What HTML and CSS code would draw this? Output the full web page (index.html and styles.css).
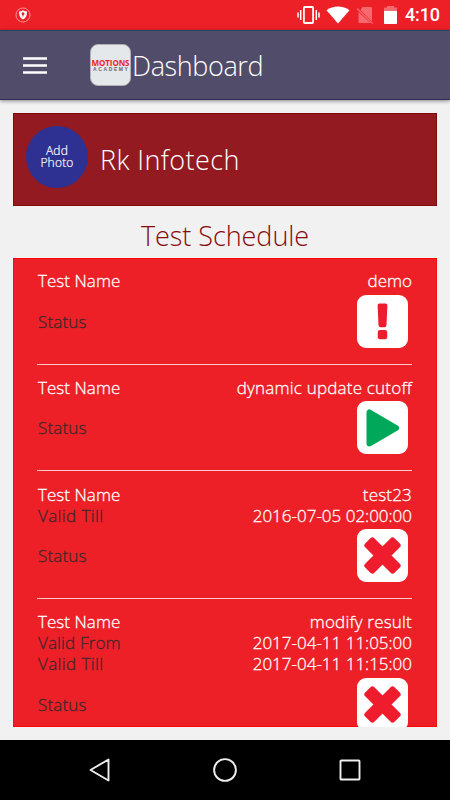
FILE: index.html
```html
<!DOCTYPE html>
<html lang="en">
<head>
<meta charset="utf-8">
<title>Dashboard</title>
<link rel="stylesheet" href="styles.css">
</head>
<body>
<div class="statusbar">
  <svg class="shield" width="16" height="16" viewBox="0 0 16 16"><circle cx="8" cy="8" r="7" fill="none" stroke="#f8a0a3" stroke-width=".9"/><path d="M8 3.300c1.400.9 2.800 1.100 4 1.100 0 4-.9 6.500-4 8.200-3.100-1.700-4-4.200-4-8.200 1.200 0 2.600-.2 4-1.100z" fill="#fff"/><path d="M8 5.200a1.500 1.500 0 0 1 .7 2.800L8 10.500 7.300 8A1.500 1.500 0 0 1 8 5.200z" fill="#ed2027"/></svg>
  <svg class="sysicons" width="106" height="20" viewBox="0 0 106 20">
    <g fill="none" stroke="#fff" stroke-width="1.800"><rect x="6.900" y="2" width="9.200" height="16" rx="1"/><path d="M3.700 5v10M1 7.500v5M19.300 5v10M22 7.500v5" stroke-width="1.500"/></g>
    <path d="M29.500 5.300C36 .3 46 .3 52.500 5.300L41 18.500z" fill="#fff"/>
    <path d="M65.500 2H74q1 0 1 1v13.400L63.500 5zM61.500 7v10q0 1 1 1h11z" fill="#f46a6e"/><path d="M60 3.500l15.500 15" stroke="#f46a6e" stroke-width="1.300"/>
    <path d="M87 6V3.500q0-1 1-1h2V1h7v1.500h2q1 0 1 1V6z" fill="#f46a6e"/><path d="M87 6h13v12q0 1-1 1H88q-1 0-1-1z" fill="#fff"/>
  </svg>
  <span class="clock">4:10</span>
</div>
<header class="appbar">
  <svg class="menu" width="24" height="17" viewBox="0 0 24 17"><path d="M0 1.500h24M0 8.500h24M0 15.500h24" stroke="#fff" stroke-width="2.400"/></svg>
  <div class="logo"><span class="logo-top">MOTIONS</span><span class="logo-sub">ACADEMY</span></div>
  <h1 class="title">Dashboard</h1>
</header>
<main class="content">
  <section class="profile">
    <div class="avatar"><span>Add</span><span>Photo</span></div>
    <span class="username">Rk Infotech</span>
  </section>
  <h2 class="heading">Test Schedule</h2>
  <section class="schedule">
    <article class="test">
      <div class="row name"><span class="label">Test Name</span><span class="demo">demo</span></div>
      <div class="row state"><span class="status">Status</span>
        <svg class="badge" viewBox="0 0 51 53"><rect width="51" height="53" rx="9" fill="#fff"/><path d="M22.500 8.500h6q2 0 1.900 2l-.9 19.500q-.2 2.200-2 2.200h-4q-1.800 0-2-2.200L20.600 10.500q-.1-2 1.900-2z" fill="#ef1c2e"/><rect x="20.800" y="35" width="9.400" height="9.300" rx="2" fill="#ef1c2e"/></svg>
      </div>
    </article>
    <article class="test">
      <div class="row name"><span class="label">Test Name</span><span class="dynamic">dynamic update cutoff</span></div>
      <div class="row state"><span class="status">Status</span>
        <svg class="badge" viewBox="0 0 51 53"><rect width="51" height="53" rx="9" fill="#fff"/><path d="M12.500 11.500v31l26.500-15.500z" fill="#00a859" stroke="#00a859" stroke-width="6" stroke-linejoin="round"/></svg>
      </div>
    </article>
    <article class="test">
      <div class="row name"><span class="label">Test Name</span><span class="test23">test23</span></div>
      <div class="row"><span class="till">Valid Till</span><span class="date">2016-07-05 02:00:00</span></div>
      <div class="row state"><span class="status">Status</span>
        <svg class="badge" viewBox="0 0 51 53"><rect width="51" height="53" rx="9" fill="#fff"/><g transform="rotate(45 25.500 26.500)" fill="#ef1c2e"><rect x="4.700" y="20" width="41.600" height="13" rx="2.800"/><rect x="19" y="5.700" width="13" height="41.600" rx="2.800"/></g></svg>
      </div>
    </article>
    <article class="test">
      <div class="row name"><span class="label">Test Name</span><span class="modify">modify result</span></div>
      <div class="row"><span class="from">Valid From</span><span class="date">2017-04-11 11:05:00</span></div>
      <div class="row"><span class="till">Valid Till</span><span class="date">2017-04-11 11:15:00</span></div>
      <div class="row state"><span class="status">Status</span>
        <svg class="badge" viewBox="0 0 51 53"><rect width="51" height="53" rx="9" fill="#fff"/><g transform="rotate(45 25.500 26.500)" fill="#ef1c2e"><rect x="4.700" y="20" width="41.600" height="13" rx="2.800"/><rect x="19" y="5.700" width="13" height="41.600" rx="2.800"/></g></svg>
      </div>
    </article>
  </section>
</main>
<nav class="navbar">
  <svg width="24" height="26" viewBox="0 0 24 26"><path d="M20.500 2.500v21L2.500 13z" fill="none" stroke="#eee" stroke-width="1.900" stroke-linejoin="round"/></svg>
  <svg width="24" height="26" viewBox="0 0 24 26"><circle cx="12" cy="13" r="10.900" fill="none" stroke="#eee" stroke-width="1.900"/></svg>
  <svg width="24" height="26" viewBox="0 0 24 26"><rect x="2.500" y="3.500" width="19" height="19" rx=".8" fill="none" stroke="#eee" stroke-width="1.900"/></svg>
</nav>
</body>
</html>
```

FILE: styles.css
```css
* { box-sizing: border-box; }
body {
  margin: 0;
  width: 450px;
  height: 800px;
  display: flex;
  flex-direction: column;
  overflow: hidden;
  background: #f1f1f1;
  color: #fff;
  font-family: "Open Sans", "Noto Sans", sans-serif;
  font-weight: 300;
}
svg { display: block; flex: none; }
span, h1, h2 { white-space: nowrap; }
.statusbar {
  flex: none;
  height: 30px;
  display: flex;
  align-items: center;
  padding: 0 10px 0 14.500px;
  background: #ed2027;
}
.sysicons { margin-left: auto; }
.clock {
  width: 35px;
  margin-left: 2px;
  font: 500 18px/32px Roboto, sans-serif;
  letter-spacing: -.15px;
}
.appbar {
  flex: none;
  height: 70px;
  display: flex;
  align-items: center;
  padding-left: 23px;
  background: #514c69;
  border-top: 1px solid #1c4668;
  border-bottom: 1px solid #342b55;
  box-shadow: 0 1px 4px rgba(0, 0, 0, .45);
  z-index: 1;
}
.logo {
  width: 41px;
  height: 42px;
  margin-left: 43px;
  display: flex;
  flex-direction: column;
  align-items: center;
  justify-content: center;
  border: 1px solid #b0afb8;
  border-radius: 8px;
  background: #e4e8eb;
}
.logo-top { font-size: 8px; line-height: 8px; font-weight: 700; color: #ed1c24; letter-spacing: -.1px; }
.logo-sub {
  height: 4px;
  font: 700 5px/4px "Liberation Sans", sans-serif;
  color: #666;
  letter-spacing: 1.600px;
  margin-right: -1.600px;
}
.title { margin: 1px 0 0 1px; font-size: 27px; line-height: 36px; font-weight: 300; letter-spacing: -.4px; }
.content { flex: 1; min-height: 0; padding: 13px 13px 0; }
.profile {
  height: 93px;
  display: flex;
  align-items: center;
  padding-left: 12px;
  background: #921a20;
  border: 1px solid #860709;
}
.avatar {
  width: 62px;
  height: 62px;
  margin-top: -6px;
  padding-top: 1px;
  display: flex;
  flex-direction: column;
  align-items: center;
  justify-content: center;
  border-radius: 50%;
  background: #2e3192;
  font-size: 12px;
  line-height: 12.500px;
  letter-spacing: .2px;
  -webkit-text-stroke: .2px currentColor;
}
.username { margin-left: 12px; font-size: 27px; line-height: 36px; letter-spacing: .4px; }
.heading {
  margin: 0;
  height: 52px;
  padding-top: 12px;
  text-align: center;
  font-size: 27px;
  line-height: 36px;
  font-weight: 300;
  letter-spacing: -.05px;
  color: #86090d;
}
.schedule {
  height: 469px;
  overflow: hidden;
  padding: 0 25px 0 24px;
  background: #ed2027;
  box-shadow: inset 0 1px #f00, inset 1px 0 #f01015, inset -1px 0 #f01015, inset 0 -1px #f00;
}
.test { padding: 12.400px 0 15.700px; border-bottom: 1px solid #ffc8ca; }
.row {
  height: 21px;
  display: flex;
  justify-content: space-between;
  align-items: center;
  font-size: 17px;
  line-height: 21px;
  color: #40282d;
  -webkit-text-stroke: .3px currentColor;
}
.row span:last-of-type:not(.status) { color: #fff; }
.name { color: #fff; }
.label { margin-left: 1px; letter-spacing: .05px; }
.status, .till, .from { margin-left: 1px; letter-spacing: .15px; }
.till { letter-spacing: .4px; }
.dynamic { letter-spacing: .2px; }
.test23, .modify { letter-spacing: .2px; }
.state { height: 53px; margin-top: 3.500px; padding-right: 4px; }
.badge { width: 51px; height: 53px; }
.navbar {
  flex: none;
  height: 60px;
  display: flex;
  align-items: center;
  justify-content: center;
  gap: 101px;
  background: #000;
}
```
